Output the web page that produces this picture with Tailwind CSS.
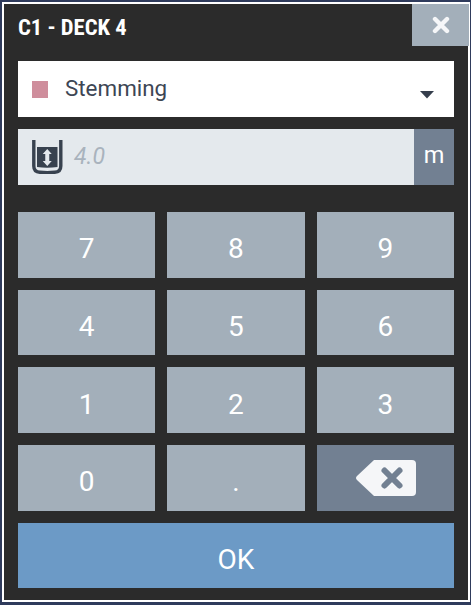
<!DOCTYPE html>
<html lang="en">
<head>
  <meta charset="UTF-8" />
  <title>C1 - DECK 4</title>
  <script src="https://cdn.jsdelivr.net/npm/@tailwindcss/browser@4"></script>
</head>
<body class="bg-[#2f3b5c] font-['Roboto',sans-serif] h-[605px] w-[471px] overflow-hidden">
  <div class="ml-[2px] mt-[2px] w-[468px] h-[600px] border-2 border-white bg-[#2b2b2b] flex flex-col px-[14px]">

    <!-- Header -->
    <header class="flex justify-between items-start h-[42px] -mx-[14px] pl-[14px] shrink-0">
      <h1 class="text-[22.6px] leading-[47px] font-bold text-white font-['Roboto_Condensed','Roboto',sans-serif]">C1 - DECK 4</h1>
      <button class="w-[57px] h-[42px] -mr-px bg-[#a3afba] flex items-center justify-center">
        <svg width="18" height="18" viewBox="0 0 18 18"><path d="M3 3l12 12M15 3L3 15" stroke="#f5f6f8" stroke-width="4.400" stroke-linecap="round"/></svg>
      </button>
    </header>

    <!-- Material select -->
    <div class="mt-[15px] h-[56px] bg-white flex items-center pl-[14px] pr-[20px] shrink-0">
      <span class="w-[16px] h-[17px] bg-[#cf8e9c]"></span>
      <span class="ml-[17px] mb-[2px] text-[22.4px] leading-[52px] text-[#3d4654]">Stemming</span>
      <svg class="ml-auto mt-[12px]" width="14" height="8" viewBox="0 0 14 8"><path d="M0 0h14L7 7.500z" fill="#353e4c"/></svg>
    </div>

    <!-- Value input -->
    <div class="mt-[12px] h-[56px] bg-[#e4e9ed] flex items-center shrink-0">
      <svg class="ml-[14px]" width="31" height="34" viewBox="0 0 31 34">
        <path d="M1.800 0V26q0 6 6 6.200q7.400 1 15 0q6-.2 6-6.200V0" fill="none" stroke="#38424f" stroke-width="3.400"/>
        <path d="M5 7H25.500V27Q15 28.500 5 27z" fill="#38424f"/>
        <path d="M15.250 9l4.500 5h-2.500v7h2.500l-4.500 5-4.500-5h2.500v-7h-2.500z" fill="#e4e9ed"/>
      </svg>
      <span class="ml-[11px] text-[23px] italic text-[#a9b3bd]">4.0</span>
      <span class="ml-auto w-[40px] h-full pb-[2px] bg-[#728092] flex items-center justify-center text-[23.500px] text-white">m</span>
    </div>

    <!-- Keypad -->
    <div class="mt-[27px] grid grid-cols-3 gap-[12px] text-[28px] text-white">
      <button class="h-[65.67px] pt-[9px] bg-[#a3afba]">7</button>
      <button class="h-[65.67px] pt-[9px] bg-[#a3afba]">8</button>
      <button class="h-[65.67px] pt-[9px] bg-[#a3afba]">9</button>
      <button class="h-[65.67px] pt-[9px] bg-[#a3afba]">4</button>
      <button class="h-[65.67px] pt-[9px] bg-[#a3afba]">5</button>
      <button class="h-[65.67px] pt-[9px] bg-[#a3afba]">6</button>
      <button class="h-[65.67px] pt-[9px] bg-[#a3afba]">1</button>
      <button class="h-[65.67px] pt-[9px] bg-[#a3afba]">2</button>
      <button class="h-[65.67px] pt-[9px] bg-[#a3afba]">3</button>
      <button class="h-[65.67px] pt-[9px] bg-[#a3afba]">0</button>
      <button class="h-[65.67px] pt-[9px] bg-[#a3afba]">.</button>
      <button class="h-[65.67px] bg-[#728092] flex items-center justify-center">
        <svg class="ml-px" width="60" height="36" viewBox="0 0 60 36">
          <path d="M18 0H56q4 0 4 4V32q0 4-4 4H18L1 20q-2-2 0-4z" fill="#f5f6f8"/>
          <path d="M28.500 10.500l15 15M43.500 10.500l-15 15" stroke="#728092" stroke-width="6" stroke-linecap="round"/>
        </svg>
      </button>
    </div>

    <button class="mt-[12px] h-[65px] pt-[9px] bg-[#6c9ac6] text-[28px] text-white shrink-0">OK</button>
  </div>
</body>
</html>
